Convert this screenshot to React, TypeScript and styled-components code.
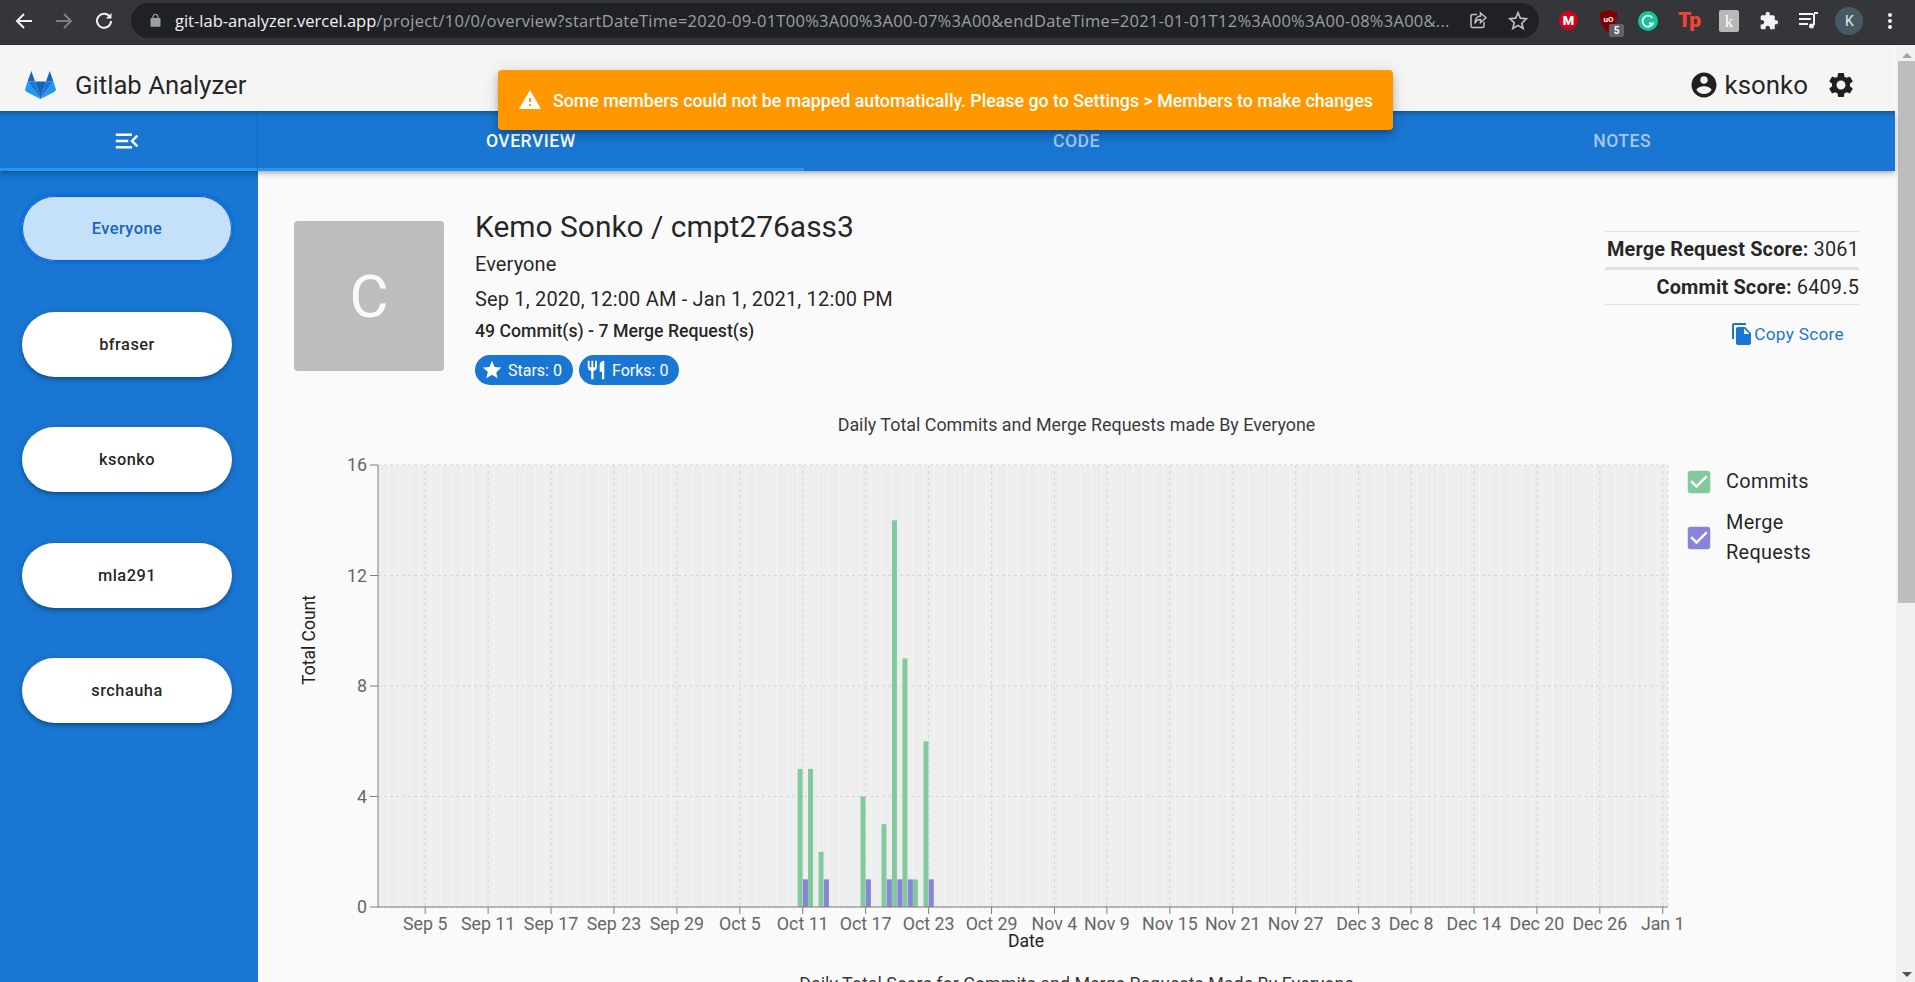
import React from 'react';
import styled, { createGlobalStyle } from 'styled-components';

const Global = createGlobalStyle`
  html, body { margin: 0; padding: 0; height: 100%; overflow: hidden; }
  body { font-family: Roboto, "Liberation Sans", sans-serif; color: rgba(0,0,0,.87); background: #fafafa; }
  * { box-sizing: border-box; }
`;

const Shell = styled.div`width: 1915px; height: 982px; display: flex; flex-direction: column; overflow: hidden;`;

/* browser chrome */
const BrowserBar = styled.div`
  height: 45px; flex: none; background: #35363a; display: flex; align-items: center;
  padding: 0 7px 3px 4px; border-bottom: 1px solid #2a2b2e;
`;
const NavSlot = styled.div<{ $dim?: boolean }>`
  width: 40px; height: 36px; flex: none; display: flex; align-items: center; justify-content: center;
  color: ${p => (p.$dim ? '#7d7f83' : '#f1f3f4')};
`;
const Omnibox = styled.div`
  width: 1408px; height: 35px; margin-left: 7px; margin-right: 9px; flex: none; background: #202124; border-radius: 18px;
  display: flex; align-items: center; padding: 0 1px 0 17px; color: #9aa0a6;
`;
const Url = styled.div`
  flex: 1; min-width: 0; margin-left: 12px; font-size: 16.5px; white-space: nowrap;
  color: #9aa0a6; font-family: "Open Sans", Roboto, sans-serif;
`;
const UrlHost = styled.span`color: #f1f3f4;`;
const UrlPath = styled.span`letter-spacing: .27px;`;
const OmniAction = styled.div`
  width: 40px; flex: none; display: flex; justify-content: center; color: #bdc1c6;
`;
const ExtSlot = styled.div`
  position: relative; width: 40.2px; height: 36px; flex: none; display: flex; align-items: center; justify-content: center; color: #f1f3f4;
`;
const ExtBadge = styled.span`
  position: absolute; left: 21px; top: 21px; width: 15px; height: 13px; background: #5f6368; color: #fff;
  font-size: 10px; font-weight: 700; line-height: 13px; text-align: center; border-radius: 2px;
`;
const ProfileDot = styled.div`
  width: 28px; height: 28px; border-radius: 50%; background: #455a64; color: #e8eaed; font-size: 14px;
  display: flex; align-items: center; justify-content: center;
`;

/* page */
const PageWrap = styled.div`flex: 1; min-height: 0; display: flex;`;
const Main = styled.div`position: relative; flex: 1; min-width: 0; display: flex; flex-direction: column;`;
const Scrollbar = styled.div`
  width: 20px; flex: none; background: #f1f1f1; display: flex; flex-direction: column; align-items: center;
  justify-content: space-between; padding: 8px 0 2px 2px; border-left: 1px solid #fafafa;
`;
const ScrollThumb = styled.div`width: 17px; height: 542px; background: #bdbdbd; margin-top: 3px;`;
const ScrollSpacer = styled.div`flex: 1;`;
const ArrowUp = styled.div`width: 0; height: 0; border-left: 5px solid transparent; border-right: 5px solid transparent; border-bottom: 5px solid #a3a3a3;`;
const ArrowDown = styled.div`width: 0; height: 0; border-left: 5px solid transparent; border-right: 5px solid transparent; border-top: 5px solid #505050; margin-bottom: 3px;`;

const AppHeader = styled.header`
  height: 66px; flex: none; background: #f5f5f5; display: flex; align-items: center; padding: 14px 39px 0 25px;
`;
const Brand = styled.div`font-size: 25.7px; line-height: 32px; margin-left: 19px; flex: 1; color: rgba(0,0,0,.87);`;
const UserName = styled.div`font-size: 25.9px; margin: 0 18px 0 6px; color: rgba(0,0,0,.87);`;

const Alert = styled.div`
  position: absolute; left: 498px; top: 25px; width: 895px; height: 60px; background: #ff9800; color: #fff; border-radius: 4px;
  display: flex; align-items: center; padding: 0 0 0 20px; z-index: 10; font-size: 17.8px; font-weight: 500;
  box-shadow: 0 3px 5px -1px rgba(0,0,0,.2), 0 6px 10px 0 rgba(0,0,0,.14), 0 1px 18px 0 rgba(0,0,0,.12);
`;
const AlertText = styled.span`margin-left: 11px; white-space: nowrap;`;

const TabRow = styled.div`
  position: relative; height: 60px; flex: none; background: #1976d2; display: flex; z-index: 3;
  box-shadow: inset 0 5px 4px -3px rgba(0,0,0,.3), 0 2px 4px -1px rgba(0,0,0,.2), 0 4px 5px 0 rgba(0,0,0,.14);
`;
const DrawerToggle = styled.div`
  width: 258px; flex: none; display: flex; align-items: center; justify-content: center; color: #fff; padding: 3px 4px 0 0;
  border-bottom: 3px solid #2196f3; border-right: 1px solid rgba(0,0,0,.12);
`;
const Tab = styled.div<{ $active?: boolean }>`
  flex: 1; display: flex; align-items: center; justify-content: center; font-size: 17.6px; font-weight: 500; letter-spacing: .5px; padding-top: 2px;
  text-transform: uppercase; color: ${p => (p.$active ? '#fff' : 'rgba(255,255,255,.62)')};
  border-bottom: 3px solid ${p => (p.$active ? '#2196f3' : 'transparent')};
`;

const Body = styled.div`flex: 1; min-height: 0; display: flex;`;
const Sidebar = styled.nav`
  width: 258px; flex: none; background: #1976d2; display: flex; flex-direction: column; gap: 50.5px; padding: 25px 26px 0 22px;
`;
const MemberButton = styled.div<{ $active?: boolean }>`
  height: 65px; flex: none; border-radius: 33px; display: flex; align-items: center; justify-content: center;
  font-size: 16.4px; font-weight: 500; letter-spacing: .47px;
  background: ${p => (p.$active ? '#c5e0f9' : '#fff')};
  color: ${p => (p.$active ? '#1565c0' : 'rgba(0,0,0,.87)')};
  box-shadow: ${p => (p.$active ? 'inset 0 0 0 1px #0b5cc0, 0 0 0 3px #0d6fdc' : '0 3px 3px -2px rgba(0,0,0,.2), 0 3px 4px 0 rgba(0,0,0,.14), 0 1px 8px 0 rgba(0,0,0,.12)')};
`;

const Content = styled.main`flex: 1; min-width: 0; overflow: hidden; background: #fafafa; padding-top: 35px;`;
const Summary = styled.section`display: flex; align-items: flex-start; padding: 0 36px; height: 207px;`;
const Avatar = styled.div`
  width: 150px; height: 150px; flex: none; margin-top: 15px; border-radius: 4px; background: #bdbdbd; color: #fafafa;
  font-size: 60px; display: flex; align-items: center; justify-content: center;
`;
const Info = styled.div`flex: 1; margin-left: 31px;`;
const RepoTitle = styled.h1`margin: 0; font-size: 29.95px; font-weight: 400; line-height: 42px;`;
const Member = styled.div`font-size: 20px; line-height: 30px; margin-top: 1px; letter-spacing: .1px;`;
const Range = styled.div`font-size: 20px; line-height: 30px; margin-top: 5px; letter-spacing: .17px;`;
const Counts = styled.div`font-size: 17.7px; font-weight: 500; line-height: 24px; margin-top: 5px;`;
const ChipRow = styled.div`display: flex; gap: 6px; margin-top: 12px;`;
const Chip = styled.div`
  height: 30px; border-radius: 15px; background: #1976d2; color: #fff; font-size: 16px; display: flex; align-items: center; padding: 0 11px 0 6px; gap: 5px;
`;
const Scores = styled.div`width: 254px; flex: none; margin-top: 25px;`;
const ScoreRow = styled.div<{ $thick?: boolean }>`
  height: ${p => (p.$thick ? 38 : 36)}px; text-align: right; font-size: 19.9px; letter-spacing: .18px; display: flex; align-items: center; justify-content: flex-end;
  padding-right: 0; border-top: ${p => (p.$thick ? 3 : 1)}px solid #e0e0e0;
  border-bottom: ${p => (p.$thick ? '1px solid #e0e0e0' : 'none')};
  white-space: nowrap;
  b { font-weight: 700; margin-right: 5px; }
`;
const CopyButton = styled.div`
  display: flex; align-items: center; justify-content: flex-end; color: #1976d2; font-size: 17.2px; letter-spacing: .3px; margin: 15px 15px 0 0; height: 28px;
`;

const ChartTitle = styled.div<{ $after?: boolean }>`
  text-align: center; font-size: 17.9px; line-height: 24px; color: rgba(0,0,0,.8); margin-top: ${p => (p.$after ? 21 : 0)}px; white-space: nowrap;
`;
const ChartArea = styled.div`position: relative; height: 515px; margin-top: -1px;`;
const Legend = styled.div`position: absolute; left: 1426px; top: 31px; width: 160px; display: flex; flex-direction: column; gap: 11px;`;
const LegendItem = styled.div`display: flex; align-items: center; gap: 12px; line-height: 30px;`;
const LegendBox = styled.div<{ $color: string }>`
  color: ${p => p.$color}; width: 30px; height: 30px; flex: none; display: flex; align-items: center; justify-content: center;
`;
const LegendLabel = styled.div`width: 90px; font-size: 19.9px; letter-spacing: .3px;`;

const IconSvg = styled.svg`flex: none; display: block;`;
const Icon = ({ d, size = 24, fill = 'currentColor' }: { d: string; size?: number; fill?: string }) => (
  <IconSvg width={size} height={size} viewBox="0 0 24 24" fill={fill}><path d={d} /></IconSvg>
);

const P = {
  menu: 'M3 18h13v-2H3v2zm0-5h10v-2H3v2zm0-7v2h13V6H3zm18 9.59L17.42 12 21 8.41 19.59 7l-5 5 5 5L21 15.59z',
  user: 'M12 2C6.48 2 2 6.48 2 12s4.48 10 10 10 10-4.48 10-10S17.52 2 12 2zm0 3c1.66 0 3 1.34 3 3s-1.34 3-3 3-3-1.34-3-3 1.34-3 3-3zm0 14.2c-2.5 0-4.71-1.28-6-3.22.03-1.99 4-3.08 6-3.08 1.99 0 5.97 1.09 6 3.08-1.29 1.94-3.5 3.22-6 3.22z',
  gear: 'M19.14 12.94c.04-.3.06-.61.06-.94 0-.32-.02-.64-.07-.94l2.03-1.58c.18-.14.23-.41.12-.61l-1.92-3.32c-.12-.22-.37-.29-.59-.22l-2.39.96c-.5-.38-1.03-.7-1.62-.94l-.36-2.54c-.04-.24-.24-.41-.48-.41h-3.84c-.24 0-.43.17-.47.41l-.36 2.54c-.59.24-1.13.57-1.62.94l-2.39-.96c-.22-.08-.47 0-.59.22L2.74 8.87c-.12.21-.08.47.12.61l2.03 1.58c-.05.3-.09.63-.09.94s.02.64.07.94l-2.03 1.58c-.18.14-.23.41-.12.61l1.92 3.32c.12.22.37.29.59.22l2.39-.96c.5.38 1.03.7 1.62.94l.36 2.54c.05.24.24.41.48.41h3.84c.24 0 .44-.17.47-.41l.36-2.54c.59-.24 1.13-.56 1.62-.94l2.39.96c.22.08.47 0 .59-.22l1.92-3.32c.12-.22.07-.47-.12-.61l-2.01-1.58zM12 15.6c-1.98 0-3.6-1.62-3.6-3.6s1.62-3.6 3.6-3.6 3.6 1.62 3.6 3.6-1.62 3.6-3.6 3.6z',
  warn: 'M1 21h22L12 2 1 21zm12-3h-2v-2h2v2zm0-4h-2v-4h2v4z',
  star: 'M12 17.27L18.18 21l-1.64-6.03L22 9.24l-7.19-.61L12 2 9.19 8.63 2 9.24l5.46 4.73L5.82 21z',
  fork: 'M11 9H9V2H7v7H5V2H3v7c0 2.12 1.66 3.84 3.75 3.97V22h2.5v-9.03C11.34 12.84 13 11.12 13 9V2h-2v7zm5-3v8h2.5v8H21V2c-2.76 0-5 2.24-5 4z',
  copy: 'M16 1H4c-1.1 0-2 .9-2 2v14h2V3h12V1zm-1 4l6 6v10c0 1.1-.9 2-2 2H7.99C6.89 23 6 22.1 6 21l.01-14c0-1.1.89-2 1.99-2h7zm-1 7h5.5L14 6.5V12z',
  check: 'M19 3H5c-1.11 0-2 .9-2 2v14c0 1.1.89 2 2 2h14c1.11 0 2-.9 2-2V5c0-1.1-.89-2-2-2zm-9 14l-5-5 1.41-1.41L10 14.17l7.59-7.59L19 8l-9 9z',
  lock: 'M18 8h-1V6c0-2.76-2.24-5-5-5S7 3.24 7 6v2H6c-1.1 0-2 .9-2 2v10c0 1.1.9 2 2 2h12c1.1 0 2-.9 2-2V10c0-1.1-.9-2-2-2zM9 6c0-1.66 1.34-3 3-3s3 1.34 3 3v2H9V6z',
  puzzle: 'M20.5 11H19V7c0-1.1-.9-2-2-2h-4V3.5C13 2.12 11.88 1 10.5 1S8 2.12 8 3.5V5H4c-1.1 0-1.99.9-1.99 2v3.8H3.5c1.49 0 2.7 1.21 2.7 2.7s-1.21 2.7-2.7 2.7H2V20c0 1.1.9 2 2 2h3.8v-1.5c0-1.49 1.21-2.7 2.7-2.7s2.7 1.21 2.7 2.7V22H17c1.1 0 2-.9 2-2v-4h1.5c1.38 0 2.5-1.12 2.5-2.5S21.88 11 20.5 11z',
};

const BackArrow = ({ flip }: { flip?: boolean }) => (
  <svg width="20" height="20" viewBox="0 0 20 20" fill="none" stroke="currentColor" strokeWidth="2" style={flip ? { transform: 'scaleX(-1)' } : undefined}>
    <path d="M18 10H3M10 3l-7 7 7 7" />
  </svg>
);
const Reload = () => (
  <svg width="20" height="20" viewBox="0 0 20 20" fill="none" stroke="currentColor" strokeWidth="2">
    <path d="M16 6.2A7 7 0 1 0 17 10" /><path d="M17.5 2v5.6h-5.6" fill="currentColor" stroke="none" />
  </svg>
);

const Logo = () => (
  <svg width="31" height="28" viewBox="0 0 31 28">
    <polygon points="15.5,28 10,10.5 21,10.5" fill="#1565c0" />
    <polygon points="15.5,28 10,10.5 2.6,10.5" fill="#1976d2" />
    <polygon points="15.5,28 21,10.5 28.4,10.5" fill="#1976d2" />
    <polygon points="2.6,10.5 0,18.5 1,20.5 15.5,28" fill="#2196f3" />
    <polygon points="28.4,10.5 31,18.5 30,20.5 15.5,28" fill="#2196f3" />
    <polygon points="2.6,10.5 6.3,0 10,10.5" fill="#1565c0" />
    <polygon points="28.4,10.5 24.7,0 21,10.5" fill="#1565c0" />
  </svg>
);

/* chart coordinates are local to the chart svg: x0 = page 258, y0 = page 436 */
const OX = 258, OY = 436;
const L = 378 - OX, R = 1668 - OX, T = 465 - OY, B = 907 - OY;
const BAND = (R - L) / 123;
const cx = (d: number) => L + BAND * (d + 0.5);
const yv = (v: number) => B - (v / 16) * (B - T);

const ticks: [string, number][] = [
  ['Sep 5', 4], ['Sep 11', 10], ['Sep 17', 16], ['Sep 23', 22], ['Sep 29', 28], ['Oct 5', 34], ['Oct 11', 40], ['Oct 17', 46], ['Oct 23', 52], ['Oct 29', 58],
  ['Nov 4', 64], ['Nov 9', 69], ['Nov 15', 75], ['Nov 21', 81], ['Nov 27', 87], ['Dec 3', 93], ['Dec 8', 98], ['Dec 14', 104], ['Dec 20', 110], ['Dec 26', 116], ['Jan 1', 122],
];
const commits: [number, number][] = [[40, 5], [41, 5], [42, 2], [46, 4], [48, 3], [49, 14], [50, 9], [51, 1], [52, 6]];
const merges = [40, 42, 46, 48, 49, 50, 52];

const DailyChart = () => (
  <svg width="1637" height="515" viewBox="0 0 1637 515" fontFamily="Roboto, sans-serif">
    {Array.from({ length: 123 }, (_, d) => (
      <rect key={d} x={cx(d) - 5} y={T} width={10} height={B - T} fill="#eeeeee" />
    ))}
    {[0, 4, 8, 12, 16].map(v => (
      <line key={v} x1={L} x2={R} y1={yv(v)} y2={yv(v)} stroke="#d6d6d6" strokeDasharray="3 3" />
    ))}
    {ticks.map(([t, d]) => (
      <line key={t} x1={cx(d)} x2={cx(d)} y1={T} y2={B} stroke="#d6d6d6" strokeDasharray="3 3" />
    ))}
    <line x1={R} x2={R} y1={T} y2={B} stroke="#d6d6d6" strokeDasharray="3 3" />
    {commits.map(([d, v]) => (
      <rect key={d} x={cx(d) - 5.2} y={yv(v)} width={5} height={B - yv(v)} fill="#82ca9d" />
    ))}
    {merges.map(d => (
      <rect key={d} x={cx(d) + 0.2} y={yv(1)} width={5} height={B - yv(1)} fill="#8884d8" />
    ))}
    <line x1={L} x2={L} y1={T} y2={B + 0.5} stroke="#7f7f7f" />
    <line x1={L} x2={R} y1={B} y2={B} stroke="#7f7f7f" />
    {[0, 4, 8, 12, 16].map(v => (
      <g key={v}>
        <line x1={L - 8} x2={L} y1={yv(v)} y2={yv(v)} stroke="#7f7f7f" />
        <text x={L - 11} y={yv(v) + 6} textAnchor="end" fontSize="17.8" fill="#666">{v}</text>
      </g>
    ))}
    {ticks.map(([t, d]) => (
      <g key={t}>
        <line x1={cx(d)} x2={cx(d)} y1={B} y2={B + 7} stroke="#7f7f7f" />
        <text x={cx(d)} y={B + 23} textAnchor="middle" fontSize="17.8" fill="#666">{t}</text>
      </g>
    ))}
    <text x={1026 - OX} y={947 - OY} textAnchor="middle" fontSize="17.6" fill="#222">Date</text>
    <text transform={`translate(${309 - OX + 6} ${640 - OY}) rotate(-90)`} textAnchor="middle" fontSize="17.5" fill="#222">Total Count</text>
  </svg>
);

const members = ['Everyone', 'bfraser', 'ksonko', 'mla291', 'srchauha'];

export default function App() {
  return (
    <Shell>
      <Global />
      <BrowserBar>
        <NavSlot><BackArrow /></NavSlot>
        <NavSlot $dim><BackArrow flip /></NavSlot>
        <NavSlot><Reload /></NavSlot>
        <Omnibox>
          <Icon d={P.lock} size={15} />
          <Url>
            <UrlHost>git-lab-analyzer.vercel.app</UrlHost><UrlPath>/project/10/0/overview?startDateTime=2020-09-01T00%3A00%3A00-07%3A00&amp;endDateTime=2021-01-01T12%3A00%3A00-08%3A00&amp;...</UrlPath>
          </Url>
          <OmniAction>
            <svg width="19" height="19" viewBox="0 0 19 19" fill="none" stroke="currentColor" strokeWidth="1.5">
              <path d="M8 3.5H3.5a1.5 1.5 0 0 0-1.5 1.5v10a1.5 1.5 0 0 0 1.5 1.5h10a1.5 1.5 0 0 0 1.5-1.5V11" />
              <path d="M11.5 2l5.5 4.8-5.5 4.7V8.6C8.5 8.6 6.8 10 6 12.5c0-4.5 2-7 5.5-7.4z" />
            </svg>
          </OmniAction>
          <OmniAction>
            <svg width="20" height="20" viewBox="0 0 24 24" fill="none" stroke="currentColor" strokeWidth="2"><path d={P.star} /></svg>
          </OmniAction>
        </Omnibox>
        <ExtSlot>
          <svg width="19" height="19" viewBox="0 0 19 19"><circle cx="9.5" cy="9.5" r="9.5" fill="#d9001b" /><text x="9.5" y="14" textAnchor="middle" fontSize="13" fontWeight="900" fontFamily="Roboto, sans-serif" fill="#fff">M</text></svg>
        </ExtSlot>
        <ExtSlot>
          <svg width="19" height="22" viewBox="0 0 19 22"><path d="M9.5 0L18 2.5C18 12 16 18 9.5 22 3 18 1 12 1 2.5z" fill="#800000" /><text x="9.5" y="12" textAnchor="middle" fontSize="8" fontWeight="700" fontFamily="Roboto, sans-serif" fill="#fff">uO</text></svg>
          <ExtBadge>5</ExtBadge>
        </ExtSlot>
        <ExtSlot>
          <svg width="20" height="20" viewBox="0 0 20 20"><circle cx="10" cy="10" r="10" fill="#15c39a" /><path d="M14.5 7A5.5 5.5 0 1 0 15 12.5h-4" fill="none" stroke="#fff" strokeWidth="1.8" /></svg>
        </ExtSlot>
        <ExtSlot>
          <svg width="24" height="22" viewBox="0 0 24 22"><text x="12" y="17" textAnchor="middle" fontSize="21" fontWeight="900" letterSpacing="-1" fontFamily="Roboto, sans-serif" fill="#f44336">Tp</text></svg>
        </ExtSlot>
        <ExtSlot>
          <svg width="20" height="22" viewBox="0 0 20 22"><rect width="20" height="22" rx="2" fill="#b8b8b8" /><text x="10" y="17" textAnchor="middle" fontSize="17" fontFamily="'Liberation Serif', serif" fill="#fff">k</text></svg>
        </ExtSlot>
        <ExtSlot><Icon d={P.puzzle} size={20} /></ExtSlot>
        <ExtSlot>
          <svg width="20" height="18" viewBox="0 0 20 18" fill="none" stroke="currentColor" strokeWidth="2"><path d="M0 2h14M0 7h12M0 12h9" /><path d="M15 2v11" /><path d="M15 1h4" /><circle cx="12.5" cy="14" r="2.5" fill="currentColor" stroke="none" /></svg>
        </ExtSlot>
        <ExtSlot><ProfileDot>K</ProfileDot></ExtSlot>
        <ExtSlot>
          <svg width="4" height="16" viewBox="0 0 4 16" fill="currentColor"><circle cx="2" cy="2" r="2" /><circle cx="2" cy="8" r="2" /><circle cx="2" cy="14" r="2" /></svg>
        </ExtSlot>
      </BrowserBar>
      <PageWrap>
        <Main>
          <AppHeader>
            <Logo />
            <Brand>Gitlab Analyzer</Brand>
            <Icon d={P.user} size={30} />
            <UserName>ksonko</UserName>
            <Icon d={P.gear} size={30} />
          </AppHeader>
          <Alert>
            <Icon d={P.warn} size={24} />
            <AlertText>Some members could not be mapped automatically. Please go to Settings &gt; Members to make changes</AlertText>
          </Alert>
          <TabRow>
            <DrawerToggle><Icon d={P.menu} size={30} /></DrawerToggle>
            <Tab $active>Overview</Tab>
            <Tab>Code</Tab>
            <Tab>Notes</Tab>
          </TabRow>
          <Body>
            <Sidebar>
              {members.map((m, i) => <MemberButton key={m} $active={i === 0}>{m}</MemberButton>)}
            </Sidebar>
            <Content>
              <Summary>
                <Avatar>C</Avatar>
                <Info>
                  <RepoTitle>Kemo Sonko / cmpt276ass3</RepoTitle>
                  <Member>Everyone</Member>
                  <Range>Sep 1, 2020, 12:00 AM - Jan 1, 2021, 12:00 PM</Range>
                  <Counts>49 Commit(s) - 7 Merge Request(s)</Counts>
                  <ChipRow>
                    <Chip><Icon d={P.star} size={22} />Stars: 0</Chip>
                    <Chip><Icon d={P.fork} size={22} />Forks: 0</Chip>
                  </ChipRow>
                </Info>
                <Scores>
                  <ScoreRow><b>Merge Request Score:</b> 3061</ScoreRow>
                  <ScoreRow $thick><b>Commit Score:</b> 6409.5</ScoreRow>
                  <CopyButton><Icon d={P.copy} size={24} />Copy Score</CopyButton>
                </Scores>
              </Summary>
              <ChartTitle>Daily Total Commits and Merge Requests made By Everyone</ChartTitle>
              <ChartArea>
                <DailyChart />
                <Legend>
                  <LegendItem>
                    <LegendBox $color="#82ca9d"><Icon d={P.check} size={30} /></LegendBox>
                    <LegendLabel>Commits</LegendLabel>
                  </LegendItem>
                  <LegendItem>
                    <LegendBox $color="#8884d8"><Icon d={P.check} size={30} /></LegendBox>
                    <LegendLabel>Merge Requests</LegendLabel>
                  </LegendItem>
                </Legend>
              </ChartArea>
              <ChartTitle $after>Daily Total Score for Commits and Merge Requests Made By Everyone</ChartTitle>
            </Content>
          </Body>
        </Main>
        <Scrollbar>
          <ArrowUp />
          <ScrollThumb />
          <ScrollSpacer />
          <ArrowDown />
        </Scrollbar>
      </PageWrap>
    </Shell>
  );
}
